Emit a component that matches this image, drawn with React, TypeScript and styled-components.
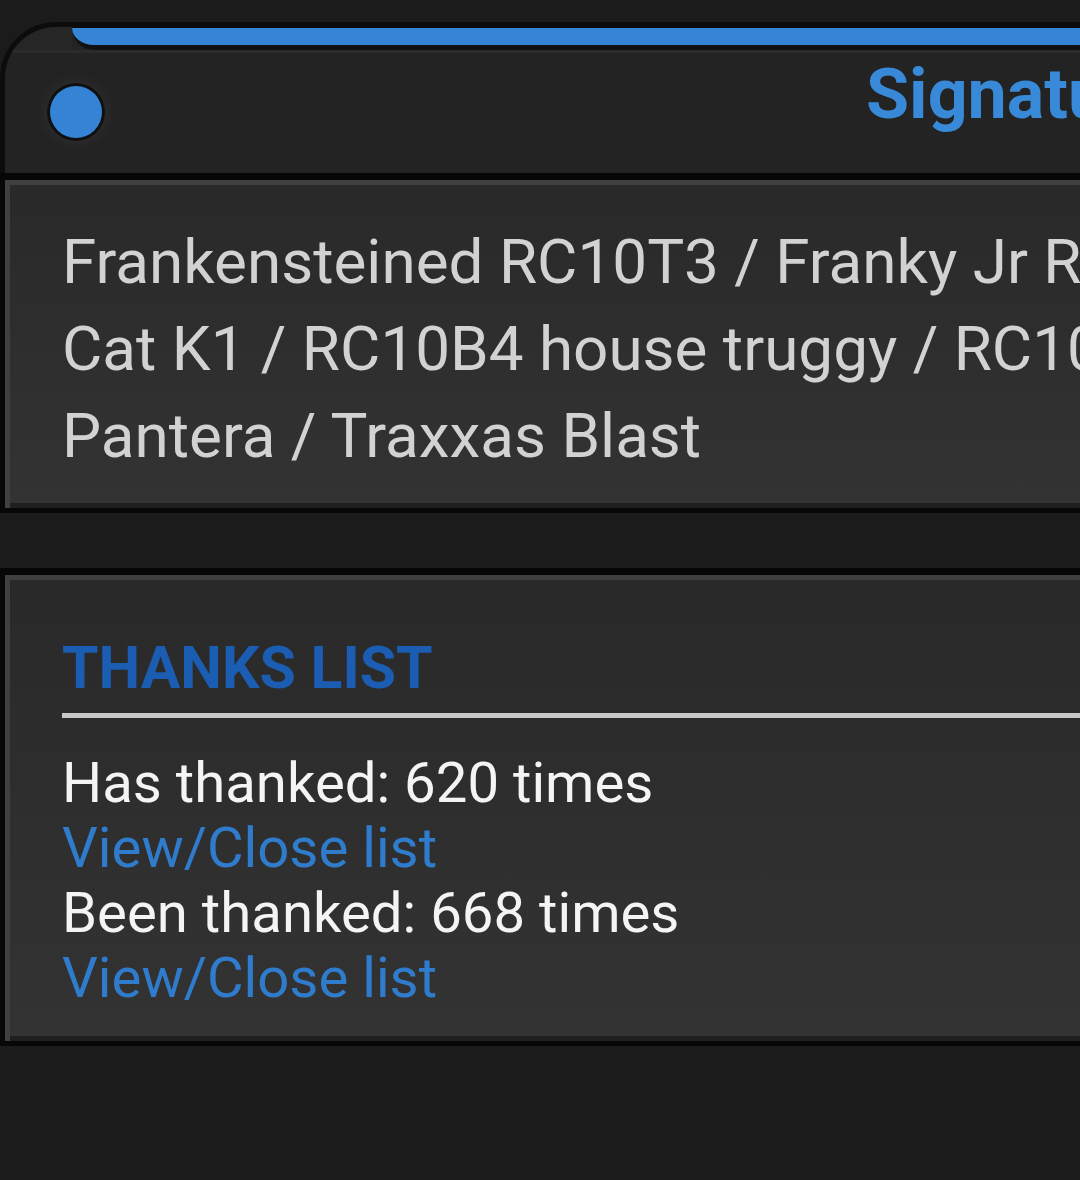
import React from 'react';
import styled, { createGlobalStyle } from 'styled-components';

const GlobalStyle = createGlobalStyle`
  html, body {
    margin: 0;
    padding: 0;
    background: #1b1b1b;
  }
  body {
    font-family: Roboto, "Noto Sans", "Liberation Sans", sans-serif;
  }
`;

const Page = styled.div`
  width: 1080px;
  height: 1180px;
  overflow: hidden;
  background: #1b1b1b;
  padding-top: 22px;
  box-sizing: border-box;
`;

const Column = styled.div`
  width: 2030px;
  display: flex;
  flex-direction: column;
`;

const Header = styled.header`
  border: 5px solid #0c0c0c;
  border-bottom: 0;
  border-top-left-radius: 56px;
  background: #232323;
  overflow: hidden;
`;

const Stripe = styled.div`
  display: flex;
  height: 23px;
`;

const StripeCorner = styled.div`
  width: 67px;
  background: #262626;
`;

const StripeBar = styled.div`
  flex: 1;
  background: #3584d6;
  border-top: 1px solid #0c0c0c;
  border-bottom: 5px solid #111;
  border-bottom-left-radius: 22px;
`;

const HeaderBody = styled.div`
  display: flex;
  align-items: center;
  height: 123px;
  box-shadow: inset 0 3px 0 #2b2b2b;
`;

const Dot = styled.span`
  flex: none;
  width: 52px;
  height: 52px;
  margin-left: 45px;
  border-radius: 50%;
  background: #3583d4;
  box-shadow: 0 0 0 3px #101010, 0 0 8px 7px #2b2b2b;
`;

const Title = styled.h1`
  align-self: flex-start;
  margin: 0 0 0 764px;
  padding-top: 3px;
  font-size: 70px;
  line-height: 82px;
  font-weight: 700;
  color: #3889d8;
`;

const Panel = styled.section<{ $gap?: number }>`
  margin-top: ${(p) => p.$gap ?? 0}px;
  border: 5px solid #070707;
  border-top-width: 7px;
  border-right: 0;
  background: linear-gradient(#292929, #333333);
  box-shadow: inset 5px 5px 0 #404040, inset 0 -5px 0 #1f1f1f;
`;

const Signature = styled.div`
  padding: 38px 0 29px 57px;
  font-size: 62px;
  line-height: 87px;
  color: #d2d2d2;
  white-space: nowrap;
`;

const Thanks = styled.div`
  padding: 58px 0 30px 57px;
`;

const SectionTitle = styled.h2`
  margin: 0;
  padding-bottom: 10px;
  border-bottom: 5px solid #c9c9c9;
  font-size: 59px;
  line-height: 70px;
  font-weight: 700;
  color: #1b5db2;
`;

const Stats = styled.div`
  margin-top: 33px;
  display: flex;
  flex-direction: column;
  font-size: 56.3px;
  line-height: 65px;
  white-space: nowrap;
`;

const Stat = styled.span`
  color: #f4f4f4;
`;

const ToggleLink = styled.a`
  color: #2f7ccc;
  text-decoration: none;
  cursor: pointer;
`;

const App: React.FC = () => (
  <Page>
    <GlobalStyle />
    <Column>
      <Header>
        <Stripe>
          <StripeCorner />
          <StripeBar />
        </Stripe>
        <HeaderBody>
          <Dot />
          <Title>Signature</Title>
        </HeaderBody>
      </Header>
      <Panel>
        <Signature>
          Frankensteined RC10T3 / Franky Jr RC10T3 / Schumacher
          <br />
          Cat K1 / RC10B4 house truggy / RC10GT / Tamiya
          <br />
          Pantera / Traxxas Blast
        </Signature>
      </Panel>
      <Panel $gap={55}>
        <Thanks>
          <SectionTitle>THANKS LIST</SectionTitle>
          <Stats>
            <Stat>Has thanked: 620 times</Stat>
            <ToggleLink>View/Close list</ToggleLink>
            <Stat>Been thanked: 668 times</Stat>
            <ToggleLink>View/Close list</ToggleLink>
          </Stats>
        </Thanks>
      </Panel>
    </Column>
  </Page>
);

export default App;
